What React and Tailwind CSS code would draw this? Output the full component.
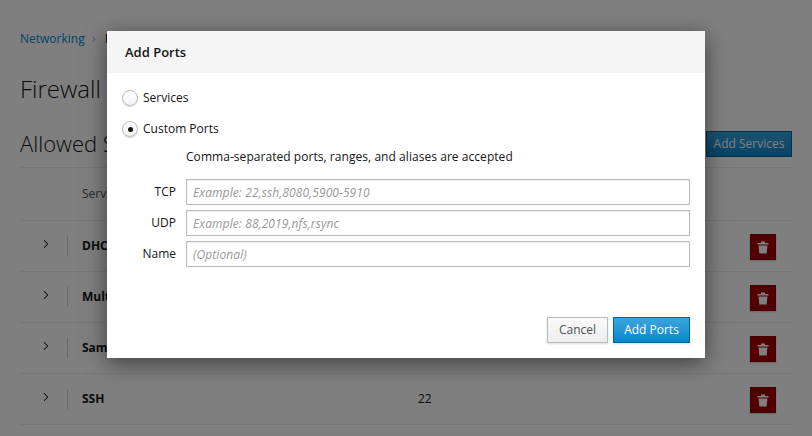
import React from 'react';
import { ChevronRight } from 'lucide-react';

const services = [
  { name: 'DHCP', ports: '' },
  { name: 'Multicast DNS', ports: '' },
  { name: 'Samba Client', ports: '' },
  { name: 'SSH', ports: '22' },
];

const fields = [
  { label: 'TCP', placeholder: 'Example: 22,ssh,8080,5900-5910' },
  { label: 'UDP', placeholder: 'Example: 88,2019,nfs,rsync' },
  { label: 'Name', placeholder: '(Optional)' },
];

const TrashIcon = () => (
  <svg width="12" height="13" viewBox="0 0 12 13" fill="currentColor">
    <path d="M4 0.5h4v1.5h3.5v1.5H0.5V2H4z" />
    <path d="M1.6 4.6h8.8l-0.7 7.9H2.3z" />
  </svg>
);

const ServiceRow = ({ service }) => (
  <div className="flex h-[51px] items-center border-b border-[#ededed]">
    <div className="flex w-[47px] shrink-0 justify-end pr-[14px]">
      <ChevronRight size={14} strokeWidth={1.8} className="mb-1 text-[#151515]" />
    </div>
    <div className="h-5 w-px bg-[#d1d1d1]" />
    <div className="w-[350px] pl-[14px] font-bold text-[#151515]">{service.name}</div>
    <div className="flex-1 text-[#151515]">{service.ports}</div>
    <button className="mt-[2px] mr-4 flex h-[26px] w-[26px] items-center justify-center border border-[#8b0000] bg-[#a30000] text-white shadow-[0_1px_2px_rgba(0,0,0,0.2)]">
      <TrashIcon />
    </button>
  </div>
);

const Radio = ({ checked, label }) => (
  <label className="flex items-center gap-[5px] text-[#151515]">
    <span className="flex h-4 w-4 items-center justify-center rounded-full border border-[#bbb] bg-gradient-to-b from-white to-[#f3f3f3] shadow-[0_1px_1px_rgba(0,0,0,0.15)]">
      {checked && <span className="h-[5px] w-[5px] rounded-full bg-[#151515]" />}
    </span>
    {label}
  </label>
);

export default function App() {
  return (
    <div className="relative h-[436px] w-[812px] overflow-hidden bg-white font-['Open_Sans',sans-serif] text-[12px]">
      {/* Page behind the dialog */}
      <div className="px-5 pt-[30px]">
        <div className="flex items-center gap-[5px] text-[12px]">
          <span className="text-[#0088ce]">Networking</span>
          <ChevronRight size={8} className="text-[#8b8d8f]" />
          <span className="ml-[2px] text-[#151515]">Firewall</span>
        </div>
        <h1 className="mt-[23px] text-[24px] leading-[36px] font-light text-[#151515]">Firewall</h1>
        <div className="mt-[19px] flex h-[42px] items-start justify-between border-b border-[#ededed]">
          <h2 className="text-[22px] leading-[34px] font-light text-[#151515]">Allowed Services</h2>
          <button className="mt-[5px] h-[26px] w-[86px] border border-[#00659c] bg-gradient-to-b from-[#39a5dc] to-[#0088ce] text-white">
            Add Services
          </button>
        </div>
        <div className="flex h-[53px] items-center border-b border-[#ededed] pl-[62px] text-[#4d5258]">Service</div>
        {services.map((service) => (
          <ServiceRow key={service.name} service={service} />
        ))}
      </div>

      {/* Backdrop and dialog */}
      <div className="absolute inset-0 bg-black/50">
        <div className="mx-auto mt-[31px] h-[327px] w-[598px] bg-white shadow-[0_5px_20px_rgba(0,0,0,0.5)]">
          <div className="flex h-[42px] items-center bg-[#f5f5f5] px-[18px] pt-px text-[13px] font-semibold text-[#151515]">
            Add Ports
          </div>
          <div className="px-[15px] pt-[16px]">
            <Radio label="Services" />
            <div className="mt-[13px]">
              <Radio checked label="Custom Ports" />
            </div>
            <p className="mt-[10px] pl-[64px] tracking-[0.05px] text-[#151515]">Comma-separated ports, ranges, and aliases are accepted</p>
            <div className="mt-[13px] flex flex-col gap-[5px]">
              {fields.map((field) => (
                <div key={field.label} className="flex items-center gap-[10px]">
                  <label className="w-[54px] text-right font-medium text-[#151515]">{field.label}</label>
                  <input
                    placeholder={field.placeholder}
                    className="h-[26px] flex-1 border border-[#bbb] px-[6px] shadow-[inset_0_1px_1px_rgba(0,0,0,0.07)] placeholder:tracking-[0.1px] placeholder:text-[#999] placeholder:italic"
                  />
                </div>
              ))}
            </div>
          </div>
          <div className="mt-[50px] flex justify-end gap-[5px] px-[15px]">
            <button className="h-[26px] w-[61px] border border-[#bbb] bg-gradient-to-b from-[#fafafa] to-[#ededed] text-[#4d5258] shadow-[0_1px_2px_rgba(0,0,0,0.15)]">
              Cancel
            </button>
            <button className="h-[26px] w-[77px] border border-[#00659c] bg-gradient-to-b from-[#39a5dc] to-[#0088ce] text-white shadow-[0_1px_2px_rgba(0,0,0,0.15)]">
              Add Ports
            </button>
          </div>
        </div>
      </div>
    </div>
  );
}
